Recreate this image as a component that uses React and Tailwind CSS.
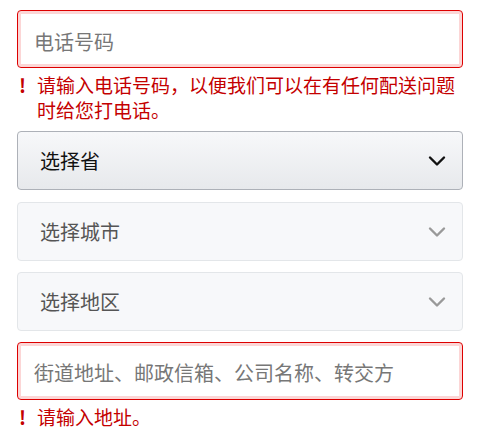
import React from "react";

const font = { fontFamily: '"Noto Sans CJK SC", "Noto Sans", sans-serif' };

function Chevron({ color }) {
  return (
    <svg width="18" height="12" viewBox="0 0 18 12" fill="none">
      <path d="M2 2.5 L9 9.5 L16 2.5" stroke={color} strokeWidth="2.4" strokeLinecap="round" strokeLinejoin="round" />
    </svg>
  );
}

export default function App() {
  return (
    <div className="w-[480px] bg-white px-[17px] pt-[10px]" style={font}>
      <div className="h-[58px] w-[446px] rounded-[4px] border border-[#dd0000] shadow-[inset_0_0_0_3px_#fcd6d6] flex items-center pl-[16px] pt-[5px] text-[20px] text-[#777777]">
        电话号码
      </div>
      <div className="mt-[4px] flex text-[19px] leading-[25px] text-[#c40000]">
        <span className="w-[20px] pl-[2px] font-bold shrink-0">!</span>
        <span>
          请输入电话号码，以便我们可以在有任何配送问题
          <br />
          时给您打电话。
        </span>
      </div>
      <div className="mt-[9px] h-[59px] w-[446px] rounded-[4px] border border-[#adb1b8] bg-gradient-to-b from-[#f7f8fa] to-[#e7e9ec] flex items-center justify-between pl-[22px] pr-[16px] text-[20px] text-[#111111]">
        <span>选择省</span>
        <Chevron color="#111111" />
      </div>
      <div className="mt-[12px] h-[59px] w-[446px] rounded-[4px] border border-[#e3e6e9] bg-[#f7f8fa] flex items-center justify-between pl-[22px] pr-[16px] text-[20px] text-[#555555]">
        <span>选择城市</span>
        <Chevron color="#999999" />
      </div>
      <div className="mt-[11px] h-[59px] w-[446px] rounded-[4px] border border-[#e3e6e9] bg-[#f7f8fa] flex items-center justify-between pl-[22px] pr-[16px] text-[20px] text-[#555555]">
        <span>选择地区</span>
        <Chevron color="#999999" />
      </div>
      <div className="mt-[11px] h-[58px] w-[446px] rounded-[4px] border border-[#dd0000] shadow-[inset_0_0_0_3px_#fcd6d6] flex items-center pl-[16px] pt-[3px] text-[20px] text-[#777777]">
        街道地址、邮政信箱、公司名称、转交方
      </div>
      <div className="mt-[7px] flex text-[19px] leading-[20px] text-[#c40000]">
        <span className="w-[20px] pl-[2px] font-bold shrink-0">!</span>
        <span>请输入地址。</span>
      </div>
    </div>
  );
}
